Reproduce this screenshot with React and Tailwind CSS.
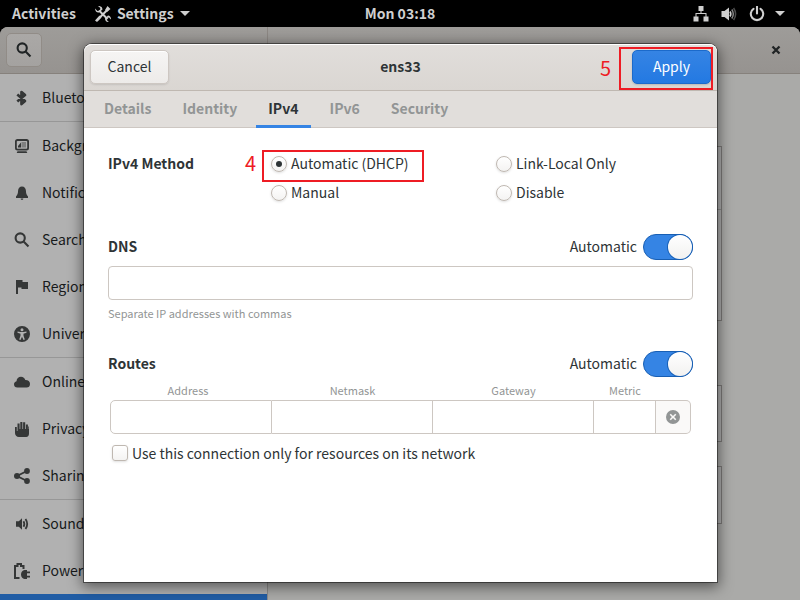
import React from "react";

function Icon({ className = "size-4", children }) {
  return (
    <svg viewBox="0 0 16 16" fill="currentColor" aria-hidden="true" className={`shrink-0 ${className}`}>
      {children}
    </svg>
  );
}

const icons = {
  bluetooth: (
    <path
      d="M3.300 4.500L11 11 7.500 14V2L11 5l-7.700 6.500"
      fill="none"
      stroke="currentColor"
      strokeWidth="2.700"
      strokeLinejoin="round"
    />
  ),
  background: (
    <>
      <path
        fillRule="evenodd"
        d="M3.500 1h9A2.500 2.500 0 0 1 15 3.500V10a2.500 2.500 0 0 1-2.500 2.500h-9A2.500 2.500 0 0 1 1 10V3.500A2.500 2.500 0 0 1 3.500 1zm0 1.900a.7.7 0 0 0-.7.7V10c0 .4.3.7.7.7h9c.4 0 .7-.3.7-.7V3.600a.7.7 0 0 0-.7-.7z"
      />
      <path d="M4 9.500V8l3-3.500v5z" />
      <path d="M7.500 4H12v5.500H7.500z" opacity=".4" />
      <path d="M3.500 13.300h9l.8 1.700H2.700z" />
    </>
  ),
  bell: (
    <path d="M8 1.500c-2.400 0-3.800 1.700-3.900 4-.1 2.900-.6 4.500-2.100 6V13h12v-1.500c-1.500-1.500-2-3.100-2.100-6-.1-2.300-1.500-4-3.900-4zM6.700 13.500h2.600c0 1-.5 1.400-1.300 1.400s-1.300-.4-1.300-1.400z" />
  ),
  search: (
    <path
      d="M10.800 6a4.600 4.600 0 1 1-9.200 0 4.600 4.600 0 0 1 9.200 0zM9.600 9.500l4.900 4.900"
      fill="none"
      stroke="currentColor"
      strokeWidth="2.100"
    />
  ),
  flag: <path d="M2 1h6.500v2H14v7H7.500V8.500H4V15H2z" />,
  access: (
    <path
      fillRule="evenodd"
      d="M8 0a8 8 0 1 1 0 16A8 8 0 0 1 8 0zm0 2.200a1.500 1.500 0 1 0 0 3 1.500 1.500 0 0 0 0-3zM3.500 5.500v1.300l3 1v2l-1.300 3.700 1.300.5L8 10.800 9.500 14l1.300-.5L9.500 9.800v-2l3-1V5.500l-3 .5h-3z"
    />
  ),
  cloud: (
    <path d="M3.500 13.500A3.400 3.400 0 0 1 0 10.300c0-1.500.9-2.700 2.500-3.100C2.700 4.500 4.500 2.800 7 2.800c2.200 0 3.800 1.300 4.300 3.200 2.800-.1 4.700 1.500 4.700 3.900 0 2.200-1.400 3.600-3.300 3.600z" />
  ),
  hand: (
    <path d="M1 6h1.800v4h.7V2.500h2.100V8h.7V1h2.100v7h.7V1.300h2.100V8h.7V3.500h2V8h.4V5.500H15v7c0 2-1 3.500-2.800 3.500H5C2.500 16 1 14.300 1 12z" />
  ),
  share: (
    <>
      <circle cx="3" cy="8" r="3" />
      <circle cx="13" cy="3" r="2.900" />
      <circle cx="13" cy="13" r="2.900" />
      <path d="M13 3L3 8l10 5" fill="none" stroke="currentColor" strokeWidth="1.900" />
    </>
  ),
  sound: (
    <>
      <path d="M2 5.300h2.800L8 2.200v11.600l-3.200-3.100H2z" />
      <path
        d="M9.500 5.200q1.700 2.800 0 5.600M11.500 3q3.400 5 0 10"
        fill="none"
        stroke="currentColor"
        strokeWidth="1.800"
      />
    </>
  ),
  power: (
    <>
      <path d="M5.500 15H1V3h2.500V1H7v2h2.500v3" fill="none" stroke="currentColor" strokeWidth="2" />
      <path d="M7 11.500c0-2.500 1.500-4 3.500-4.500H13v1.500h3v1.800h-3v2.400h3v1.800h-3V16h-2.500C8.500 15.500 7 14 7 11.500z" />
    </>
  ),
};

const groups = [
  [["bluetooth", "Bluetooth"]],
  [
    ["background", "Background"],
    ["bell", "Notifications"],
    ["search", "Search"],
    ["flag", "Region & Language"],
    ["access", "Universal Access"],
  ],
  [
    ["cloud", "Online Accounts"],
    ["hand", "Privacy"],
    ["share", "Sharing"],
  ],
  [
    ["sound", "Sound"],
    ["power", "Power"],
  ],
];

function TopBar() {
  return (
    <header className="grid h-[27px] shrink-0 grid-cols-[1fr_auto_1fr] items-center bg-black px-3 text-[14px] font-bold text-[#cfcfcf]">
      <div className="flex items-center gap-[19px]">
        <button type="button">Activities</button>
        <button type="button" className="flex items-center gap-1.5">
          <Icon>
            <path
              d="M2.500 13.800L13 3.200M4 4.500l8.500 8.500"
              fill="none"
              stroke="currentColor"
              strokeWidth="2"
            />
            <path d="M0 2.500L2.500 5 5 4.500 5.300 2 3 0c2.500-.3 4.500 1.200 4.500 3.500L4 6.500C2 7 0 5 0 2.500zM12.500 0L15.500 3l-3.500 3-2-2zM10 12.500l3-3c2 .2 3.200 1.800 3 4L14 11.500l-2 .5-.2 2 2 2c-2.200.2-3.800-1.300-3.800-3.500zM0 14.500l4.500-5 2 2L2 16z" />
          </Icon>
          Settings
          <svg viewBox="0 0 10 5" className="h-[5px] w-2.5" fill="currentColor" aria-hidden="true">
            <path d="M0 0h10L5 5z" />
          </svg>
        </button>
      </div>
      <time>Mon 03:18</time>
      <button type="button" aria-label="System menu" className="mr-[3px] flex items-center justify-self-end">
        <Icon>
          <path d="M5.500 0h5v5h-5zM.5 10.500h5v5h-5zM10.500 10.500h5v5h-5zM7.500 5h1v2H13.500v3.500h-1V8h-9v2.500h-1V7h5z" />
        </Icon>
        <Icon className="ml-3 size-4">
          <path d="M.5 5h3L8 1.500v13L3.500 11h-3z" />
          <path d="M9 5.500q1.600 2.500 0 5" fill="none" stroke="currentColor" strokeWidth="1.600" />
          <path d="M10.800 3.500q3 4.500 0 9" fill="none" stroke="#858585" strokeWidth="1.500" />
          <path d="M12.600 2q4 6 0 12" fill="none" stroke="#4c4c4c" strokeWidth="1.500" />
        </Icon>
        <Icon className="ml-3 size-4">
          <path
            d="M4.500 2.800a6.200 6.200 0 1 0 7 0M8 .8V7.500"
            fill="none"
            stroke="currentColor"
            strokeWidth="2.100"
            strokeLinecap="round"
          />
        </Icon>
        <svg viewBox="0 0 10 5" className="ml-2.5 h-[5px] w-2.5" fill="currentColor" aria-hidden="true">
          <path d="M0 0h10L5 5z" />
        </svg>
      </button>
    </header>
  );
}

function SettingsWindow() {
  return (
    <div className="flex min-h-0 grow flex-col overflow-hidden rounded-t-lg bg-[#aaaaa8] text-[#171a1b]">
      <div className="flex h-[47px] shrink-0 border-b border-[#86817c] bg-linear-to-b from-[#9e9c99] to-[#969390]">
        <div className="flex w-[268px] items-center border-r border-[#8c8783] px-1.5">
          <button
            type="button"
            aria-label="Search"
            className="grid h-[34px] w-9 place-items-center rounded-[5px] border border-[#918c87] bg-linear-to-b from-[#aaa8a6] to-[#a4a2a0] text-[#202425]"
          >
            <Icon>{icons.search}</Icon>
          </button>
        </div>
        <div className="flex grow items-center justify-end pr-[19px]">
          <button type="button" aria-label="Close" className="grid size-[10px] place-items-center text-[#202425]">
            <svg viewBox="0 0 10 10" className="size-[10px]" aria-hidden="true">
              <path d="M1.500 1.500l7 7M8.500 1.500l-7 7" stroke="currentColor" strokeWidth="2.300" />
            </svg>
          </button>
        </div>
      </div>
      <div className="flex min-h-0 grow">
        <nav className="w-[268px] shrink-0 overflow-hidden border-r border-[#8c8b8a] bg-[#b1b1b1]">
          {groups.map((group) => (
            <ul key={group[0][0]} className="border-b border-[#979797] last-of-type:border-b-0">
              {group.map(([icon, name]) => (
                <li key={icon}>
                  <a href="#" className="flex h-[47px] items-center gap-3 pl-3.5 text-[14px] whitespace-nowrap">
                    <Icon className="size-4 text-[#353737]">{icons[icon]}</Icon>
                    {name}
                  </a>
                </li>
              ))}
            </ul>
          ))}
          <div className="h-[47px] bg-[#215da5]" />
        </nav>
        <main className="flex min-w-0 grow flex-col items-center pt-[72px]">
          <div className="h-[175px] w-[376px] shrink-0 border border-[#7d7b79] bg-[#b0b0b0]">
            <div className="h-[63px] border-b border-[#8f8f8e]" />
          </div>
          <div className="mt-16 h-[57px] w-[376px] shrink-0 border border-[#7d7b79] bg-[#b0b0b0]" />
          <div className="mt-6 h-[58px] w-[376px] shrink-0 border border-[#7d7b79] bg-[#b0b0b0]" />
        </main>
      </div>
    </div>
  );
}

function Radio({ label, checked, children }) {
  return (
    <label className="relative flex h-[29px] items-center gap-1">
      <input
        type="radio"
        name="method"
        defaultChecked={checked}
        className="grid size-4 shrink-0 appearance-none place-items-center rounded-full border border-[#bfb8b1] bg-linear-to-b from-white to-[#f4f3f2] shadow-sm checked:before:size-1.5 checked:before:rounded-full checked:before:bg-[#2e3436]"
      />
      {label}
      {children}
    </label>
  );
}

function SwitchRow({ title, id }) {
  return (
    <div className="flex h-[26px] items-center justify-between">
      <h2 className="pb-0.5 font-bold">{title}</h2>
      <div className="flex items-center gap-1.5">
        <label htmlFor={id} className="pb-0.5">
          Automatic
        </label>
        <input
          id={id}
          type="checkbox"
          role="switch"
          defaultChecked
          className="flex h-[26px] w-[50px] appearance-none justify-end rounded-full border border-[#185fb4] bg-[#3584e4] before:size-6 before:rounded-full before:bg-linear-to-b before:from-white before:to-[#f2f1f0] before:shadow-[0_0_0_1px_#185fb4]"
        />
      </div>
    </div>
  );
}

const tabs = ["Details", "Identity", "IPv4", "IPv6", "Security"];
const columns = ["Address", "Netmask", "Gateway", "Metric"];

function Dialog() {
  return (
    <section
      role="dialog"
      aria-label="ens33"
      className="flex min-w-0 grow flex-col rounded-t-lg bg-white text-[14px] text-[#2e3436] shadow-[0_0_0_1px_rgba(0,0,0,0.45),0_3px_14px_2px_rgba(0,0,0,0.5)]"
    >
      <header className="grid h-[47px] shrink-0 grid-cols-[1fr_auto_1fr] items-center rounded-t-lg border-b border-[#bfb8b1] bg-linear-to-b from-[#e1dedb] to-[#dad6d2] px-1.5 shadow-[inset_0_1px_white]">
        <button
          type="button"
          className="h-[34px] w-[79px] rounded-[5px] border border-[#cdc7c2] bg-linear-to-b from-[#f6f5f4] to-[#edebe9] pb-0.5 shadow-[inset_0_1px_white,0_1px_2px_rgba(0,0,0,0.1)]"
        >
          Cancel
        </button>
        <h1 className="pb-0.5 font-bold">ens33</h1>
        <div className="relative justify-self-end">
          <button
            type="button"
            className="block h-[34px] w-[79px] rounded-[5px] border border-[#1b6acb] bg-linear-to-b from-[#3584e4] to-[#2379e2] pb-0.5 text-white shadow-[0_1px_2px_rgba(0,0,0,0.15)]"
          >
            Apply
          </button>
          <span className="pointer-events-none absolute -top-[3px] -right-0.5 -bottom-1.5 -left-[13px] border-2 border-[#ee1c24]" />
          <span className="absolute top-1.5 -left-8 text-[20px] leading-6 text-[#ee1c24]">5</span>
        </div>
      </header>
      <nav className="flex h-[37px] shrink-0 gap-[7px] border-b border-[#cdc7c2] bg-[#e1dedb] px-2">
        {tabs.map((tab) => (
          <button
            key={tab}
            type="button"
            className={
              tab === "IPv4"
                ? "-mb-px border-b-3 border-[#3584e4] px-3 font-bold"
                : "px-3 pb-0.5 font-bold text-[#929595]"
            }
          >
            {tab}
          </button>
        ))}
      </nav>
      <form className="flex flex-col px-6 pt-[21px]">
        <fieldset aria-labelledby="method-title" className="grid grid-cols-[163px_225px_1fr]">
          <h2 id="method-title" className="row-span-2 leading-[29px] font-bold">
            IPv4 Method
          </h2>
          <Radio label="Automatic (DHCP)" checked>
            <span className="pointer-events-none absolute top-px -bottom-1 -left-[9px] w-[162px] border-2 border-[#ee1c24]" />
            <span className="absolute top-0.5 -left-[26px] text-[20px] leading-6 text-[#ee1c24]">4</span>
          </Radio>
          <Radio label="Link-Local Only" />
          <Radio label="Manual" />
          <Radio label="Disable" />
        </fieldset>
        <div className="mt-[27px]">
          <SwitchRow title="DNS" id="dns-auto" />
          <input
            type="text"
            aria-label="DNS"
            className="mt-1.5 block h-[34px] w-full rounded border border-[#cdc7c2] px-2"
          />
          <p className="mt-1 text-[11px] leading-[18px] text-[#929595]">Separate IP addresses with commas</p>
        </div>
        <div className="mt-[29px]">
          <SwitchRow title="Routes" id="routes-auto" />
          <div className="mx-0.5 mt-1 grid grid-cols-[162px_161px_161px_1fr_35px] items-end">
            {columns.map((column) => (
              <label key={column} className="group text-center text-[11px] leading-[18px] text-[#929595]">
                <span className="block pb-px group-first:pr-1.5">{column}</span>
                <input
                  type="text"
                  className="block h-[34px] w-full border-y border-r border-[#cdc7c2] px-2 group-first:rounded-l-[5px] group-first:border-l"
                />
              </label>
            ))}
            <button
              type="button"
              aria-label="Remove route"
              className="grid h-[34px] place-items-center rounded-r-[5px] border-y border-r border-[#cdc7c2] bg-[#faf9f8] text-[#929595]"
            >
              <Icon>
                <path
                  fillRule="evenodd"
                  d="M8 1a7 7 0 1 1 0 14A7 7 0 0 1 8 1zM5.800 4.700L4.700 5.800 6.900 8l-2.200 2.200 1.100 1.100L8 9.100l2.200 2.200 1.100-1.100L9.100 8l2.200-2.200-1.100-1.100L8 6.900z"
                />
              </Icon>
            </button>
          </div>
          <label className="mt-[9px] ml-1 flex h-5 items-center gap-1">
            <input
              type="checkbox"
              className="size-4 shrink-0 appearance-none rounded-[3px] border border-[#bfb8b1] bg-linear-to-b from-white to-[#f4f3f2] shadow-sm"
            />
            Use this connection only for resources on its network
          </label>
        </div>
      </form>
    </section>
  );
}

export default function App() {
  return (
    <div className="relative flex h-screen flex-col overflow-hidden bg-black font-['Noto_Sans_CJK_SC','Noto_Sans',sans-serif]">
      <TopBar />
      <SettingsWindow />
      <div className="absolute inset-0 flex pt-11 pr-[83px] pb-[18px] pl-[84px]">
        <Dialog />
      </div>
    </div>
  );
}
